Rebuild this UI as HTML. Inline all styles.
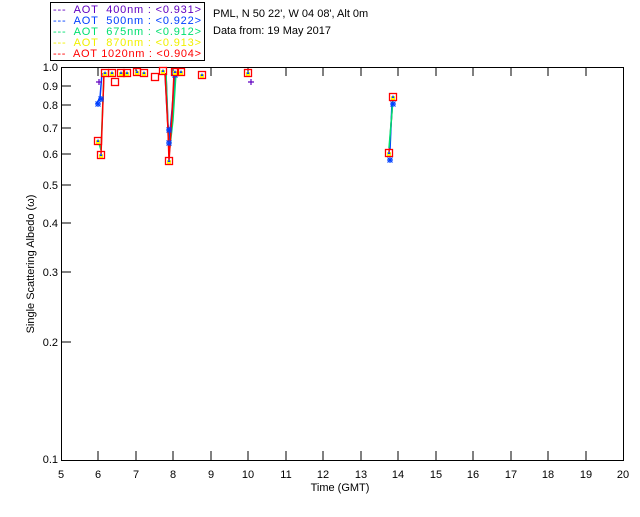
<!DOCTYPE html>
<html><head><style>
body{margin:0;background:#fff;width:640px;height:512px;overflow:hidden}
svg text{font-family:"Liberation Sans",sans-serif;font-size:11px;white-space:pre}
</style></head><body>
<svg width="640" height="512" xmlns="http://www.w3.org/2000/svg">
<defs>
<g id="sq"><rect x="-3.5" y="-3.5" width="7" height="7" fill="none" stroke="#f00" stroke-width="1.3"/></g>
<g id="st" stroke="#0040ff" stroke-width="1.2"><line x1="-3" y1="0" x2="3" y2="0"/><line x1="0" y1="-3" x2="0" y2="3"/><line x1="-2.5" y1="-2.5" x2="2.5" y2="2.5"/><line x1="-2.5" y1="2.5" x2="2.5" y2="-2.5"/></g>
<g id="mk"><rect x="-2" y="-1" width="4" height="4" fill="#ff0"/><path d="M-1.5 1 L0 -2 L1.5 1Z" fill="#0040ff"/><use href="#sq"/></g>
</defs>
<rect x="50.5" y="2.5" width="154" height="58" fill="none" stroke="#000"/>
<g>
<text x="53" y="13" fill="#6000c0" textLength="148" xml:space="preserve">---  AOT  400nm : &lt;0.931&gt;</text>
<text x="53" y="24" fill="#0040ff" textLength="148" xml:space="preserve">---  AOT  500nm : &lt;0.922&gt;</text>
<text x="53" y="35" fill="#00e070" textLength="148" xml:space="preserve">---  AOT  675nm : &lt;0.912&gt;</text>
<text x="53" y="46" fill="#f0f000" textLength="148" xml:space="preserve">---  AOT  870nm : &lt;0.913&gt;</text>
<text x="53" y="57" fill="#f00" textLength="148" xml:space="preserve">---  AOT 1020nm : &lt;0.904&gt;</text>
</g>
<text x="213" y="17" fill="#000">PML, N 50 22', W 04 08', Alt 0m</text>
<text x="213" y="34" fill="#000">Data from: 19 May 2017</text>
<rect x="61.5" y="67.5" width="562" height="393" fill="none" stroke="#000"/>
<g stroke="#000">
<path d="M98 460v-9M136 460v-9M173 460v-9M211 460v-9M248 460v-9M286 460v-9M323 460v-9M361 460v-9M398 460v-9M436 460v-9M473 460v-9M511 460v-9M548 460v-9M586 460v-9"/>
<path d="M98 67v9M136 67v9M173 67v9M211 67v9M248 67v9M286 67v9M323 67v9M361 67v9M398 67v9M436 67v9M473 67v9M511 67v9M548 67v9M586 67v9"/>
<path d="M61 86h10M61 105h10M61 128h10M61 154h10M61 185h10M61 223h10M61 272h10M61 342h10"/>
</g>
<g font-size="10" text-anchor="end">
<text x="58" y="71">1.0</text><text x="58" y="90">0.9</text><text x="58" y="109">0.8</text><text x="58" y="132">0.7</text><text x="58" y="158">0.6</text><text x="58" y="189">0.5</text><text x="58" y="227">0.4</text><text x="58" y="276">0.3</text><text x="58" y="346">0.2</text><text x="58" y="463">0.1</text>
</g>
<g text-anchor="middle">
<text x="61" y="478">5</text><text x="98" y="478">6</text><text x="136" y="478">7</text><text x="173" y="478">8</text><text x="211" y="478">9</text><text x="248" y="478">10</text><text x="286" y="478">11</text><text x="323" y="478">12</text><text x="361" y="478">13</text><text x="398" y="478">14</text><text x="436" y="478">15</text><text x="473" y="478">16</text><text x="511" y="478">17</text><text x="548" y="478">18</text><text x="586" y="478">19</text><text x="623" y="478">20</text>
<text x="340" y="491">Time (GMT)</text>
</g>
<text transform="translate(34,264) rotate(-90)" text-anchor="middle">Single Scattering Albedo (ω)</text>
<g fill="none" stroke-width="1.5">
<polyline stroke="#0040ff" points="96,104 100,98 102,73"/>
<polyline stroke="#00e070" points="98,140 101,150 104,73"/>
<polyline stroke="#f00" points="101,155 104,73"/>
<polyline stroke="#6000c0" points="166,73 168,125 170,135 172,125 175,73"/>
<polyline stroke="#0040ff" points="165,73 167,110 169,143 172,110 175,73"/>
<polyline stroke="#00e070" points="166,73 168,130 169,155 173,120 176,73"/>
<polyline stroke="#f00" points="165,73 168,130 169,161 172,115 174,73"/>
<polyline stroke="#f00" points="389,153 393,97"/>
<polyline stroke="#0040ff" points="390,150 392,103"/>
<polyline stroke="#00e070" points="389,148 393,100"/>
</g>
<g>
<use href="#st" x="98" y="104"/><use href="#st" x="101" y="99"/><use href="#st" x="169" y="143"/><use href="#st" x="169" y="130"/><use href="#st" x="390" y="160"/><use href="#st" x="393" y="104"/><use href="#st" x="175" y="75"/>
<path d="M96 82h6M99 79v6M248 82h6M251 79v6" stroke="#6000c0" stroke-width="1.2"/>
<use href="#mk" x="105" y="73"/><use href="#mk" x="121" y="73"/><use href="#mk" x="127" y="73"/><use href="#mk" x="137" y="72"/><use href="#mk" x="144" y="73"/><use href="#mk" x="163" y="71"/><use href="#mk" x="175" y="72"/><use href="#mk" x="181" y="72"/><use href="#mk" x="202" y="75"/><use href="#mk" x="248" y="73"/><use href="#mk" x="112" y="73"/>
<use href="#sq" x="115" y="82"/><use href="#sq" x="155" y="77"/>
<use href="#mk" x="98" y="141"/><use href="#mk" x="101" y="155"/><use href="#mk" x="169" y="161"/><use href="#mk" x="389" y="153"/><use href="#mk" x="393" y="97"/>
</g>
</svg>
</body></html>
